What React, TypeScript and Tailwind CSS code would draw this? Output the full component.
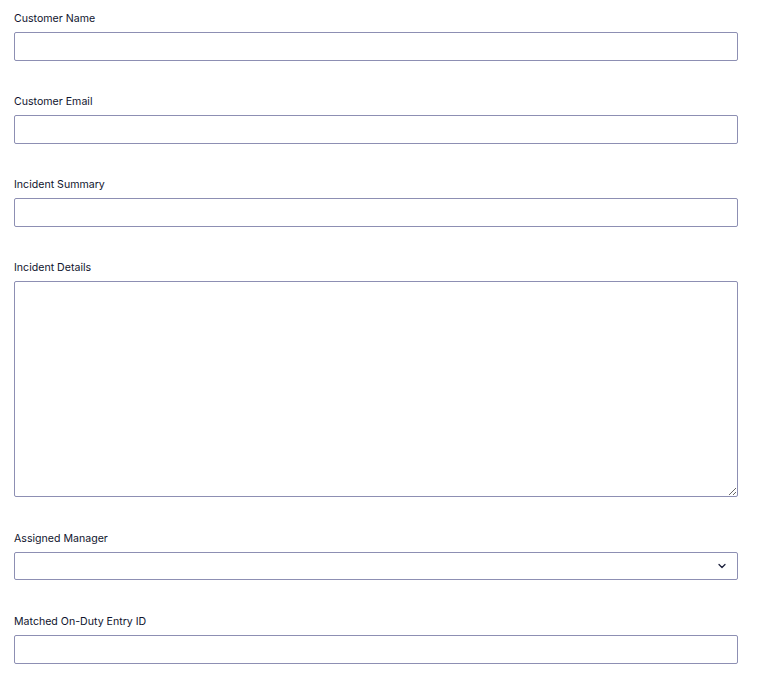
import { ChevronDown } from 'lucide-react';

const inputCls =
  'block w-full h-[29px] px-2 rounded-[2px] border border-[#8d8fb3] bg-white text-[12px] text-[#1b1f3b] outline-none';

function Field({ label, children, gap = 'mb-[32px]' }: { label: string; children: React.ReactNode; gap?: string }) {
  return (
    <div className={gap}>
      <label className="block h-[16px] leading-[16px] pt-[1px] text-[10.6px] text-[#10142e] mb-[6px]">{label}</label>
      {children}
    </div>
  );
}

export default function App() {
  return (
    <div
      className="bg-white min-h-screen pt-[10px] pl-[14px] pr-[26px]"
      style={{ fontFamily: 'Inter, "Noto Sans", sans-serif' }}
    >
      <Field label="Customer Name">
        <input type="text" className={inputCls} />
      </Field>
      <Field label="Customer Email">
        <input type="email" className={inputCls} />
      </Field>
      <Field label="Incident Summary">
        <input type="text" className={inputCls} />
      </Field>
      <Field label="Incident Details" gap="mb-[33px]">
        <textarea className="block w-full h-[216px] px-2 py-1 rounded-[2px] border border-[#8d8fb3] bg-white text-[12px] text-[#1b1f3b] outline-none resize-y" />
      </Field>
      <Field label="Assigned Manager" gap="mb-[33px]">
        <div className="relative">
          <select className="block w-full h-[28px] px-2 rounded-[2px] border border-[#8d8fb3] bg-white text-[12px] text-[#1b1f3b] outline-none appearance-none">
            <option value=""></option>
          </select>
          <ChevronDown
            size={12}
            strokeWidth={2.5}
            className="absolute right-[10px] top-[8px] text-[#1b1f3b] pointer-events-none"
          />
        </div>
      </Field>
      <Field label="Matched On-Duty Entry ID">
        <input type="text" className={inputCls} />
      </Field>
    </div>
  );
}
